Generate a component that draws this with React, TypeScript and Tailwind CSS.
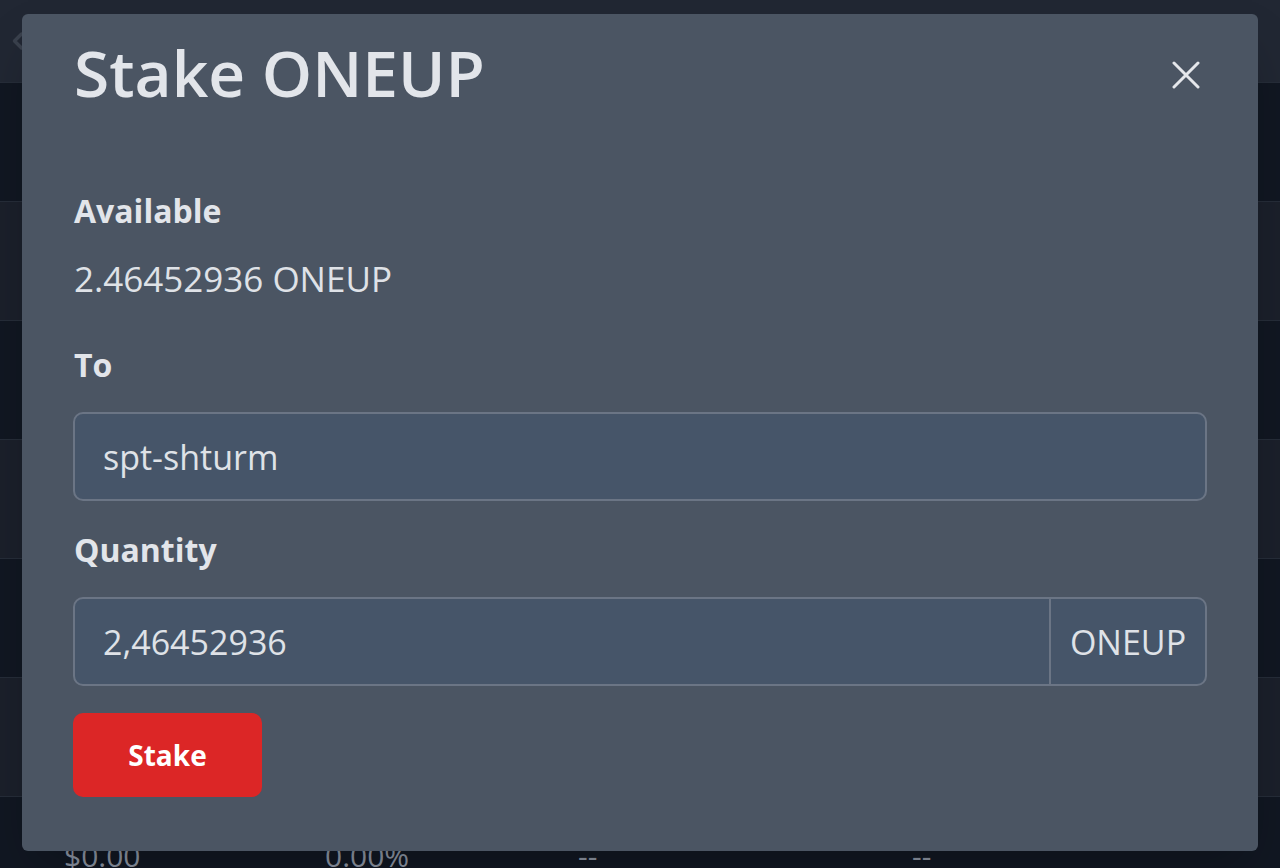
import { ChevronLeft } from 'lucide-react';

const rows = [
  { price: '', change: '', a: '', b: '' },
  { price: '', change: '', a: '', b: '' },
  { price: '', change: '', a: '', b: '' },
  { price: '', change: '', a: '', b: '' },
  { price: '', change: '', a: '', b: '' },
  { price: '', change: '', a: '', b: '' },
  { price: '$0.00', change: '0.00%', a: '--', b: '--' },
];

export default function App() {
  return (
    <div className="relative h-[868px] w-[1280px] overflow-hidden bg-[#111722] font-['Open_Sans',sans-serif]">
      {/* Tabla de fondo */}
      <div className="flex h-[82px] items-center bg-[#212733] pl-1 text-[#3a414d]">
        <ChevronLeft size={28} strokeWidth={3} />
      </div>
      <div className="flex flex-col">
        {rows.map((r, i) => (
          <div
            key={i}
            className={`flex h-[119px] items-center border-t border-[#262d39] text-[30px] leading-[40px] text-[#8b93a1] ${
              i % 2 === 0 ? 'bg-[#111722]' : 'bg-[#1b202b]'
            }`}
          >
            <span className="w-[325px] pl-[64px]">{r.price}</span>
            <span className="w-[253px]">{r.change}</span>
            <span className="w-[334px]">{r.a}</span>
            <span>{r.b}</span>
          </div>
        ))}
      </div>

      {/* Modal */}
      <div className="absolute left-[22px] top-[14px] h-[837px] w-[1236px] rounded-md bg-[#4b5563] shadow-2xl">
        <div className="flex items-start justify-between pl-[52px] pr-[58px] pt-[22px]">
          <h2 className="text-[64px] font-semibold leading-[74px] text-[#e2e5ea]">Stake ONEUP</h2>
          <button className="mt-[25px] text-[#e5e7eb]">
            <svg width="28" height="28" viewBox="0 0 28 28" fill="none" stroke="currentColor" strokeWidth="3" strokeLinecap="round">
              <path d="M2 2 L26 26 M26 2 L2 26" />
            </svg>
          </button>
        </div>

        <div className="flex flex-col px-[51px] pt-[81px]">
          <p className="ml-px text-[32px] font-bold leading-[40px] text-[#e2e5ea]">Available</p>
          <p className="ml-px mt-[28px] text-[35px] leading-[40px] text-[#dfe2e7]">2.46452936 ONEUP</p>

          <p className="ml-px mt-[46px] text-[32px] font-bold leading-[40px] text-[#e2e5ea]">To</p>
          <div className="mt-[27px] flex h-[89px] items-center rounded-[10px] border-2 border-[#6b7585] bg-[#465569] px-[28px] text-[34px] leading-[40px] text-[#dfe2e7]">
            spt-shturm
          </div>

          <p className="ml-px mt-[29px] text-[32px] font-bold leading-[40px] text-[#e2e5ea]">Quantity</p>
          <div className="mt-[27px] flex h-[89px] rounded-[10px] border-2 border-[#6b7585] bg-[#465569] text-[34px] leading-[40px] text-[#dfe2e7]">
            <div className="flex flex-1 items-center px-[28px]">2,46452936</div>
            <div className="flex w-[156px] items-center justify-center border-l-2 border-[#6b7585]">ONEUP</div>
          </div>

          <div className="mt-[27px]">
            <button className="h-[84px] w-[189px] rounded-[10px] bg-[#dc2626] text-[28px] font-bold text-white">
              Stake
            </button>
          </div>
        </div>
      </div>
    </div>
  );
}
